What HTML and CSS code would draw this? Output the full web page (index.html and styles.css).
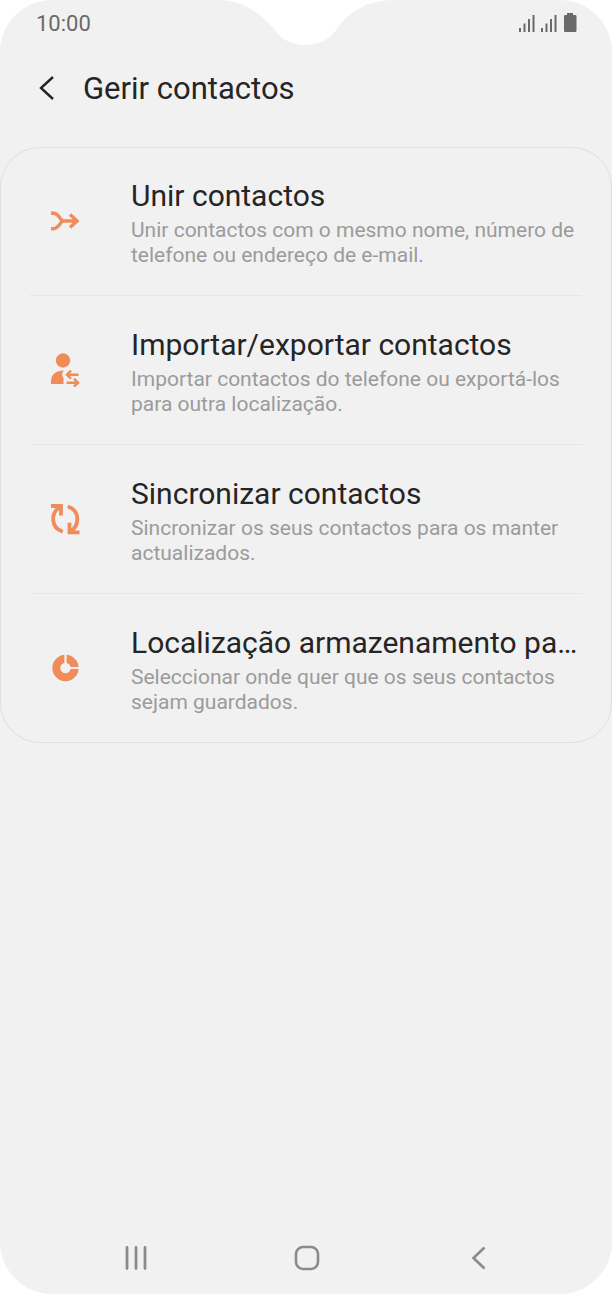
FILE: index.html
```html
<!DOCTYPE html>
<html lang="pt">
<head>
  <meta charset="UTF-8" />
  <meta name="viewport" content="width=device-width, initial-scale=1.0"/>
  <title>Gerir contactos</title>
  <link rel="stylesheet" href="styles.css">
</head>
<body>

  <div class="phone">
    <svg class="notch" width="172" height="46" viewBox="0 0 172 46" aria-hidden="true">
      <path d="M0 0C22 1 38 11 54 29C62 40 72 45 86 45C99 45 110 39 117 29C129 11 147 1 172 0Z" fill="#fff"/>
    </svg>

    <div class="status-bar">
      <span class="time">10:00</span>
      <svg width="60" height="20" viewBox="0 0 60 20" aria-hidden="true">
        <g stroke="#6a6a6a" stroke-width="2">
          <path d="M2 15V19M6.500 10.500V19M11 6V19M15.500 2V19"/>
          <path d="M24 15V19M28.500 10.500V19M33 6V19M37.500 2V19"/>
        </g>
        <path d="M49 0H55V2H57Q58.500 2 58.500 3V18Q58.500 19 57 19H47Q46 19 46 18V3Q46 2 47 2H49Z" fill="#6a6a6a"/>
      </svg>
    </div>

    <header class="app-bar">
      <button type="button" class="back" aria-label="Voltar">
        <svg width="16" height="26" viewBox="0 0 16 26">
          <path d="M14 1L2 12L14 23" fill="none" stroke="#252525" stroke-width="2.400"/>
        </svg>
      </button>
      <h1>Gerir contactos</h1>
    </header>

    <main class="card">
      <a href="#unir" class="row">
        <svg class="icon" width="30" height="30" viewBox="0 0 30 30" aria-hidden="true">
          <g fill="none" stroke="#f08c5a" stroke-width="3.400">
            <path d="M1 7.300H3.500C8 7.300 9 11.500 12.500 15C9 18.500 8 22.700 3.500 22.700H1"/>
            <path d="M12 15H27M20 8.500L27 15L20 21.500"/>
          </g>
        </svg>
        <div class="text">
          <h2>Unir contactos</h2>
          <p>Unir contactos com o mesmo nome, número de telefone ou endereço de e-mail.</p>
        </div>
      </a>

      <a href="#importar" class="row">
        <svg class="icon" width="30" height="34" viewBox="0 0 30 34" aria-hidden="true">
          <g fill="#f08c5a">
            <circle cx="13" cy="7.500" r="7.200"/>
            <path d="M1 31V28C1.500 21 6 17.500 14 17.500Q10.500 21 13.500 25V31Z"/>
          </g>
          <g fill="none" stroke="#f08c5a" stroke-width="2.500">
            <path d="M28.500 21.700H17.500M21 17.700L17 21.700L21 25.700"/>
            <path d="M16.500 29.700H27.500M24 25.700L28 29.700L24 33.700"/>
          </g>
        </svg>
        <div class="text">
          <h2>Importar/exportar contactos</h2>
          <p>Importar contactos do telefone ou exportá-los para outra localização.</p>
        </div>
      </a>

      <a href="#sincronizar" class="row">
        <svg class="icon" width="30" height="32" viewBox="0 0 30 32" aria-hidden="true">
          <g fill="none" stroke="#f08c5a" stroke-width="3.800">
            <path d="M1 3H11V12.500M10 4C0.500 10 0.500 25 12.800 28.800"/>
            <path d="M29.500 29.300H19.500V19.800M20.500 28.300C30 22.300 30 7.300 17.700 3.500"/>
          </g>
        </svg>
        <div class="text">
          <h2>Sincronizar contactos</h2>
          <p>Sincronizar os seus contactos para os manter actualizados.</p>
        </div>
      </a>

      <a href="#localizacao" class="row">
        <svg class="icon" width="30" height="30" viewBox="0 0 30 30" aria-hidden="true">
          <circle cx="15.500" cy="15" r="9.200" fill="none" stroke="#f08c5a" stroke-width="8"/>
          <path d="M15.500 0V10M20 15H30" stroke="#f1f1f1" stroke-width="2.200"/>
        </svg>
        <div class="text">
          <h2>Localização armazenamento pa…</h2>
          <p>Seleccionar onde quer que os seus contactos sejam guardados.</p>
        </div>
      </a>
    </main>

    <nav class="nav-bar">
      <button type="button" aria-label="Recentes">
        <svg width="26" height="26" viewBox="0 0 26 26">
          <path d="M4 2.500V23.500M13 2.500V23.500M22 2.500V23.500" stroke="#8b8b8b" stroke-width="2.800" stroke-linecap="round"/>
        </svg>
      </button>
      <button type="button" aria-label="Início">
        <svg width="26" height="26" viewBox="0 0 26 26">
          <rect x="2" y="2" width="22" height="22" rx="7" fill="none" stroke="#8b8b8b" stroke-width="2.600"/>
        </svg>
      </button>
      <button type="button" aria-label="Voltar atrás">
        <svg width="26" height="26" viewBox="0 0 26 26">
          <path d="M18.500 2.500L7.500 13L18.500 23.500" fill="none" stroke="#8b8b8b" stroke-width="2.600"/>
        </svg>
      </button>
    </nav>
  </div>

</body>
</html>
```
FILE: styles.css
```css
* {
  box-sizing: border-box;
}
body {
  margin: 0;
  background: #fff;
  font-family: Roboto, sans-serif;
  color: #252525;
}
.phone {
  position: relative;
  display: flex;
  flex-direction: column;
  min-height: 100vh;
  background: #f1f1f1;
  border-radius: 52px;
}
.notch {
  position: absolute;
  top: 0;
  left: 50%;
  transform: translateX(-50%);
}
.status-bar {
  display: flex;
  justify-content: space-between;
  align-items: center;
  height: 46px;
  padding: 0 34px 0 36px;
  font-size: 22px;
  color: #6a6a6a;
}
.app-bar {
  display: flex;
  align-items: center;
  gap: 28px;
  height: 86px;
  margin-bottom: 15px;
  padding: 0 39px;
}
h1, h2, p {
  margin: 0;
  font-weight: normal;
}
h1 {
  font-size: 31px;
  line-height: 36px;
}
button {
  padding: 0;
  border: none;
  background: none;
  cursor: pointer;
}
button svg {
  display: block;
}
.card {
  border: 1px solid #dfdfdf;
  border-radius: 40px;
}
.row {
  display: flex;
  align-items: center;
  gap: 51px;
  margin: 0 29px;
  padding: 30px 0 27px 20px;
  color: inherit;
  text-decoration: none;
}
.row + .row {
  padding-top: 31px;
  border-top: 1px solid #e6e6e6;
}
.icon {
  flex: none;
  margin-bottom: 4px;
}
.text {
  flex: 1;
  min-width: 0;
}
h2 {
  font-size: 30px;
  line-height: 36px;
}
.text p {
  margin-top: 4px;
  font-size: 21px;
  line-height: 25px;
  color: #9b9b9b;
}
.nav-bar {
  display: grid;
  grid-template-columns: repeat(3, 1fr);
  justify-items: center;
  align-items: center;
  height: 72px;
  margin-top: auto;
  padding: 0 47px 0 50px;
}
```
